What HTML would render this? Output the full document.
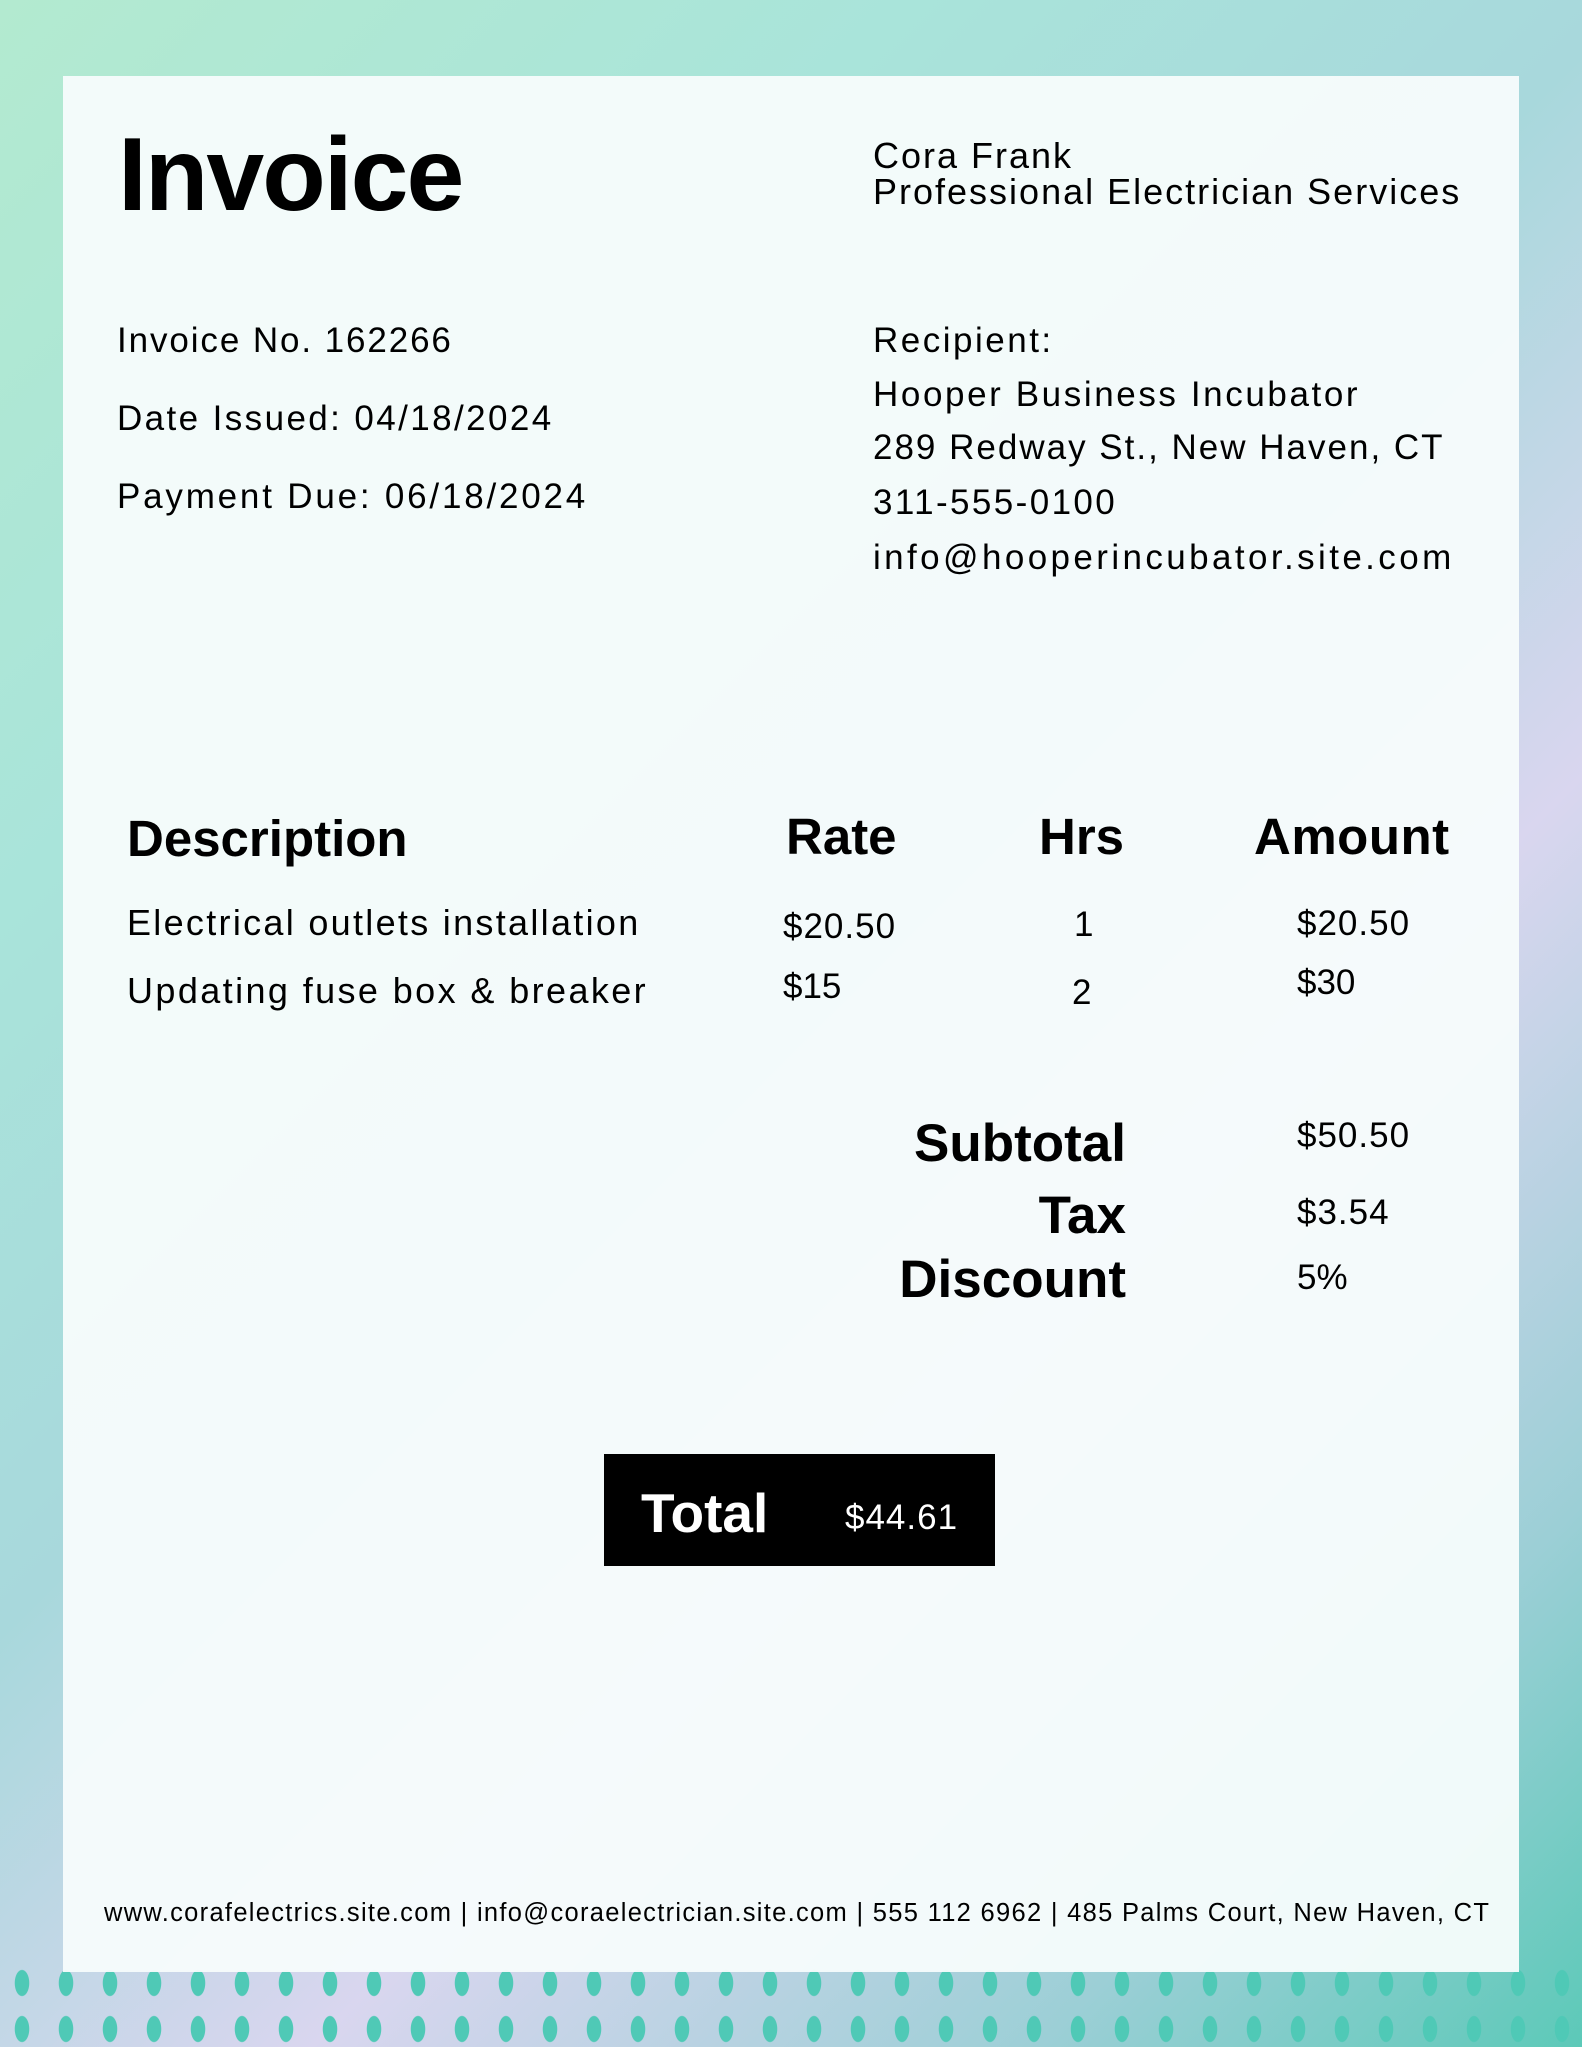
<!DOCTYPE html>
<html><head><style>
*{margin:0;padding:0}
body{width:1582px;height:2047px;position:relative;overflow:hidden;font-family:"Liberation Sans",sans-serif;color:#000;
background:linear-gradient(135deg,#b3ead0 0%,#a9e4da 25%,#a8d8dc 45%,#d9d6ef 65%,#9ccfd6 85%,#5cc9b8 100%);}
.card{position:absolute;left:63px;top:76px;width:1456px;height:1896px;background:rgba(247,252,252,0.95)}
.t{position:absolute;white-space:nowrap;line-height:1}
.b{font-weight:bold}
.r{letter-spacing:2.3px}
.dots{position:absolute;left:0;top:1960px;width:1582px;height:87px;background:radial-gradient(ellipse 10px 18px,#4fc9b6 70%,transparent 75%) 0 0/44px 46px}
</style></head><body>
<div class="dots"></div>
<div class="card"></div>
<div class="t b" style="left:118px;top:123px;font-size:104px;letter-spacing:-2px">Invoice</div>
<div class="t" style="left:873px;top:138px;font-size:36px;letter-spacing:2px">Cora Frank</div>
<div class="t" style="left:873px;top:174px;font-size:36px;letter-spacing:2px">Professional Electrician Services</div>
<div class="t" style="left:117px;top:323px;font-size:35px;letter-spacing:1.9px">Invoice No. 162266</div>
<div class="t" style="left:117px;top:401px;font-size:35px;letter-spacing:2.4px">Date Issued: 04/18/2024</div>
<div class="t" style="left:117px;top:479px;font-size:35px;letter-spacing:2.8px">Payment Due: 06/18/2024</div>
<div class="t" style="left:873px;top:323px;font-size:35px;letter-spacing:2.5px">Recipient:</div>
<div class="t" style="left:873px;top:377px;font-size:35px;letter-spacing:2.6px">Hooper Business Incubator</div>
<div class="t" style="left:873px;top:430px;font-size:35px;letter-spacing:2px">289 Redway St., New Haven, CT</div>
<div class="t" style="left:873px;top:485px;font-size:35px;letter-spacing:2.4px">311-555-0100</div>
<div class="t" style="left:873px;top:540px;font-size:35px;letter-spacing:3.4px">info@hooperincubator.site.com</div>
<div class="t b" style="left:127px;top:813px;font-size:51px">Description</div>
<div class="t b" style="left:786px;top:811px;font-size:51px">Rate</div>
<div class="t b" style="left:1039px;top:811px;font-size:51px">Hrs</div>
<div class="t b" style="left:1254px;top:811px;font-size:51px;letter-spacing:0.5px">Amount</div>
<div class="t r" style="left:127px;top:905px;font-size:36px">Electrical outlets installation</div>
<div class="t r" style="left:127px;top:973px;font-size:36px;letter-spacing:2.4px">Updating fuse box &amp; breaker</div>
<div class="t" style="left:783px;top:909px;font-size:35px;letter-spacing:1px">$20.50</div>
<div class="t" style="left:783px;top:969px;font-size:35px">$15</div>
<div class="t" style="left:1074px;top:907px;font-size:35px">1</div>
<div class="t" style="left:1072px;top:975px;font-size:35px">2</div>
<div class="t" style="left:1297px;top:906px;font-size:35px;letter-spacing:1px">$20.50</div>
<div class="t" style="left:1297px;top:965px;font-size:35px">$30</div>
<div class="t b" style="right:456px;top:1117px;font-size:53px">Subtotal</div>
<div class="t b" style="right:456px;top:1189px;font-size:53px">Tax</div>
<div class="t b" style="right:456px;top:1253px;font-size:53px">Discount</div>
<div class="t" style="left:1297px;top:1118px;font-size:35px;letter-spacing:1px">$50.50</div>
<div class="t" style="left:1297px;top:1195px;font-size:35px;letter-spacing:1px">$3.54</div>
<div class="t" style="left:1297px;top:1260px;font-size:35px">5%</div>
<div style="position:absolute;left:604px;top:1454px;width:391px;height:112px;background:#000"></div>
<div class="t b" style="left:641px;top:1486px;font-size:55px;color:#fff">Total</div>
<div class="t" style="left:845px;top:1500px;font-size:35px;color:#fff;letter-spacing:1px">$44.61</div>
<div class="t" style="left:104px;top:1901px;font-size:25.5px;letter-spacing:1.3px">www.corafelectrics.site.com | info@coraelectrician.site.com | 555 112 6962 | 485 Palms Court, New Haven, CT</div>
</body></html>
